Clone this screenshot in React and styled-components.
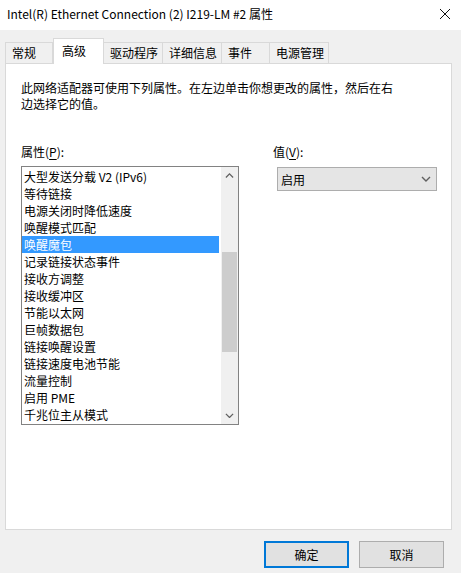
import React from "react";
import styled, { createGlobalStyle } from "styled-components";

const GlobalStyle = createGlobalStyle`
  *, *::before, *::after {
    box-sizing: border-box;
  }
  html, body {
    margin: 0;
    padding: 0;
    background: #f0f0f0;
  }
  body {
    font-family: "Noto Sans CJK SC", "Noto Sans", "Liberation Sans", sans-serif;
    font-size: 12px;
    color: #000;
  }
`;

const tabs = [
  { label: "常规", w: 48 },
  { label: "高级", w: 51, active: true },
  { label: "驱动程序", w: 59 },
  { label: "详细信息", w: 59 },
  { label: "事件", w: 48 },
  { label: "电源管理", w: 59 },
];

const items = [
  "大型发送分载 V2 (IPv6)",
  "等待链接",
  "电源关闭时降低速度",
  "唤醒模式匹配",
  "唤醒魔包",
  "记录链接状态事件",
  "接收方调整",
  "接收缓冲区",
  "节能以太网",
  "巨帧数据包",
  "链接唤醒设置",
  "链接速度电池节能",
  "流量控制",
  "启用 PME",
  "千兆位主从模式",
];

const Window = styled.div`
  width: 461px;
  height: 573px;
  display: flex;
  flex-direction: column;
  background: #f0f0f0;
  overflow: hidden;
`;

const TitleBar = styled.div`
  height: 30px;
  flex: none;
  display: flex;
  align-items: center;
  justify-content: space-between;
  padding: 0 10px 3px 7px;
  background: #fff;
  font-size: 12px;
  line-height: 16px;
`;

const CloseBtn = styled.div`
  width: 12px;
  height: 12px;
  display: flex;
  align-items: center;
  justify-content: center;
`;

const Body = styled.div`
  padding: 8px 9px 0 5px;
  display: flex;
  flex-direction: column;
`;

const TabRow = styled.div`
  height: 26px;
  display: flex;
  align-items: flex-end;
  position: relative;
  z-index: 2;
`;

const Tab = styled.div`
  width: ${(p) => p.$w}px;
  height: ${(p) => (p.$active ? 26 : 21)}px;
  margin-bottom: ${(p) => (p.$active ? 0 : 1)}px;
  padding: ${(p) => (p.$active ? "3px 0 0 8px" : "1px 0 0 6px")};
  border: 1px solid #d9d9d9;
  border-bottom: none;
  border-left-width: ${(p) => (p.$first || p.$active ? 1 : 0)}px;
  background: ${(p) => (p.$active ? "#fff" : "#f0f0f0")};
  line-height: 17px;
  white-space: nowrap;
`;

const Panel = styled.div`
  margin-top: -1px;
  height: 467px;
  border: 1px solid #d9d9d9;
  background: #fff;
  padding: 16px 14px 0 15px;
`;

const Desc = styled.p`
  margin: 0;
  max-width: 378px;
  line-height: 16px;
`;

const Columns = styled.div`
  display: grid;
  grid-template-columns: 218px 164px;
  column-gap: 34px;
  margin-top: 32px;
`;

const Field = styled.div`
  display: flex;
  flex-direction: column;
`;

const Label = styled.div`
  line-height: 16px;
  height: 16px;
  margin-bottom: ${(p) => p.$gap}px;
  u {
    text-decoration: underline;
    text-underline-offset: 2px;
  }
`;

const ListBox = styled.div`
  width: 218px;
  height: 259px;
  border: 1px solid #828282;
  display: flex;
  background: #fff;
`;

const ListItems = styled.div`
  flex: 1;
  padding-top: 1px;
  padding-right: 2px;
`;

const Item = styled.div`
  height: 17px;
  line-height: 17px;
  padding-left: 2px;
  white-space: nowrap;
  background: ${(p) => (p.$selected ? "#3399ff" : "transparent")};
  color: ${(p) => (p.$selected ? "#fff" : "#000")};
`;

const ScrollBar = styled.div`
  width: 17px;
  background: #f0f0f0;
  display: flex;
  flex-direction: column;
`;

const ScrollArrow = styled.div`
  height: 17px;
  flex: none;
  display: flex;
  align-items: center;
  justify-content: center;
`;

const ScrollTrack = styled.div`
  flex: 1;
  padding-top: 68px;
`;

const Thumb = styled.div`
  height: 100px;
  margin: 0 1px;
  background: #cdcdcd;
`;

const Select = styled.div`
  width: 160px;
  height: 24px;
  margin-left: 4px;
  margin-top: 1px;
  border: 1px solid #adadad;
  background: #e5e5e5;
  display: flex;
  align-items: center;
  justify-content: space-between;
  padding: 0 5px 0 3px;
`;

const Footer = styled.div`
  display: flex;
  justify-content: flex-end;
  gap: 10px;
  margin-top: 11px;
  padding-right: 8px;
`;

const Button = styled.button`
  width: 85px;
  height: 27px;
  font: inherit;
  color: #000;
  background: #e1e1e1;
  border: ${(p) => (p.$default ? "2px solid #0078d7" : "1px solid #adadad")};
  padding: 0;
`;

const Chevron = ({ up, size = 9 }) => (
  <svg width={size} height={size * 0.6} viewBox="0 0 10 6">
    <path
      d={up ? "M1 5 L5 1 L9 5" : "M1 1 L5 5 L9 1"}
      fill="none"
      stroke="#606060"
      strokeWidth="1.4"
    />
  </svg>
);

export default function App() {
  return (
    <Window>
      <GlobalStyle />
      <TitleBar>
        <span>Intel(R) Ethernet Connection (2) I219-LM #2 属性</span>
        <CloseBtn>
          <svg width="12" height="12" viewBox="0 0 12 12">
            <path d="M1 1 L11 11 M11 1 L1 11" stroke="#111" strokeWidth="1" />
          </svg>
        </CloseBtn>
      </TitleBar>
      <Body>
        <TabRow>
          {tabs.map((t, i) => (
            <Tab key={t.label} $w={t.w} $active={t.active} $first={i === 0}>
              {t.label}
            </Tab>
          ))}
        </TabRow>
        <Panel>
          <Desc>
            此网络适配器可使用下列属性。在左边单击你想更改的属性，然后在右边选择它的值。
          </Desc>
          <Columns>
            <Field>
              <Label $gap={6}>
                属性(<u>P</u>):
              </Label>
              <ListBox>
                <ListItems>
                  {items.map((it, i) => (
                    <Item key={it} $selected={i === 4}>
                      {it}
                    </Item>
                  ))}
                </ListItems>
                <ScrollBar>
                  <ScrollArrow>
                    <Chevron up />
                  </ScrollArrow>
                  <ScrollTrack>
                    <Thumb />
                  </ScrollTrack>
                  <ScrollArrow>
                    <Chevron />
                  </ScrollArrow>
                </ScrollBar>
              </ListBox>
            </Field>
            <Field>
              <Label $gap={6}>
                值(<u>V</u>):
              </Label>
              <Select>
                <span>启用</span>
                <Chevron size={10} />
              </Select>
            </Field>
          </Columns>
        </Panel>
        <Footer>
          <Button $default>确定</Button>
          <Button>取消</Button>
        </Footer>
      </Body>
    </Window>
  );
}
